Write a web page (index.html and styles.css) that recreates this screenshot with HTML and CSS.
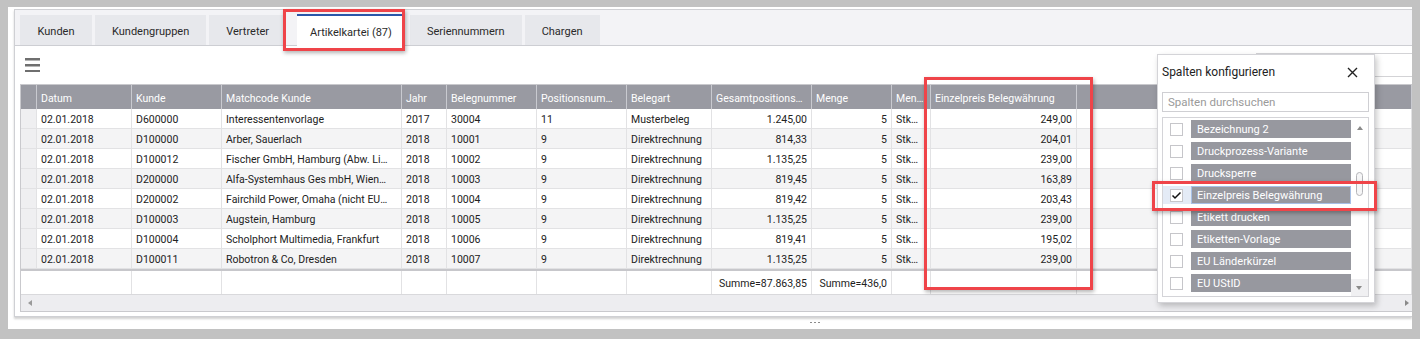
FILE: index.html
```html
<!DOCTYPE html>
<html lang="de">
<head>
    <meta charset="UTF-8">
    <title>Artikelkartei</title>
    <link rel="stylesheet" href="styles.css">
</head>
<body>
    <div class="frame">
        <div class="panel">
            <div class="tabs">
                <div class="tab">Kunden</div>
                <div class="tab">Kundengruppen</div>
                <div class="tab">Vertreter</div>
                <div class="tab active">Artikelkartei (87)</div>
                <div class="tab">Seriennummern</div>
                <div class="tab">Chargen</div>
            </div>

            <div class="content">
                <div class="toolbar">
                    <svg class="menu-icon" width="15" height="14" viewBox="0 0 15 14">
                        <rect x="0" y="0" width="15" height="2.5" fill="#6f6f6f"/>
                        <rect x="0" y="6" width="15" height="2.5" fill="#6f6f6f"/>
                        <rect x="0" y="12" width="15" height="2.5" fill="#6f6f6f"/>
                    </svg>
                    <div class="search"></div>
                </div>

                <div class="grid">
                    <div class="grid-row head">
                        <div class="cell"></div>
                        <div class="cell">Datum</div>
                        <div class="cell">Kunde</div>
                        <div class="cell">Matchcode Kunde</div>
                        <div class="cell">Jahr</div>
                        <div class="cell">Belegnummer</div>
                        <div class="cell">Positionsnum…</div>
                        <div class="cell">Belegart</div>
                        <div class="cell">Gesamtpositions…</div>
                        <div class="cell">Menge</div>
                        <div class="cell">Men…</div>
                        <div class="cell">Einzelpreis Belegwährung</div>
                        <div class="cell"></div>
                    </div>

                    <div class="grid-row">
                        <div class="cell sel"></div>
                        <div class="cell">02.01.2018</div>
                        <div class="cell">D600000</div>
                        <div class="cell">Interessentenvorlage</div>
                        <div class="cell">2017</div>
                        <div class="cell">30004</div>
                        <div class="cell">11</div>
                        <div class="cell">Musterbeleg</div>
                        <div class="cell num">1.245,00</div>
                        <div class="cell num">5</div>
                        <div class="cell">Stk…</div>
                        <div class="cell num">249,00</div>
                        <div class="cell"></div>
                    </div>
                    <div class="grid-row">
                        <div class="cell sel"></div>
                        <div class="cell">02.01.2018</div>
                        <div class="cell">D100000</div>
                        <div class="cell">Arber, Sauerlach</div>
                        <div class="cell">2018</div>
                        <div class="cell">10001</div>
                        <div class="cell">9</div>
                        <div class="cell">Direktrechnung</div>
                        <div class="cell num">814,33</div>
                        <div class="cell num">5</div>
                        <div class="cell">Stk…</div>
                        <div class="cell num">204,01</div>
                        <div class="cell"></div>
                    </div>
                    <div class="grid-row">
                        <div class="cell sel"></div>
                        <div class="cell">02.01.2018</div>
                        <div class="cell">D100012</div>
                        <div class="cell">Fischer GmbH, Hamburg (Abw. Li…</div>
                        <div class="cell">2018</div>
                        <div class="cell">10002</div>
                        <div class="cell">9</div>
                        <div class="cell">Direktrechnung</div>
                        <div class="cell num">1.135,25</div>
                        <div class="cell num">5</div>
                        <div class="cell">Stk…</div>
                        <div class="cell num">239,00</div>
                        <div class="cell"></div>
                    </div>
                    <div class="grid-row">
                        <div class="cell sel"></div>
                        <div class="cell">02.01.2018</div>
                        <div class="cell">D200000</div>
                        <div class="cell">Alfa-Systemhaus Ges mbH, Wien…</div>
                        <div class="cell">2018</div>
                        <div class="cell">10003</div>
                        <div class="cell">9</div>
                        <div class="cell">Direktrechnung</div>
                        <div class="cell num">819,45</div>
                        <div class="cell num">5</div>
                        <div class="cell">Stk…</div>
                        <div class="cell num">163,89</div>
                        <div class="cell"></div>
                    </div>
                    <div class="grid-row">
                        <div class="cell sel"></div>
                        <div class="cell">02.01.2018</div>
                        <div class="cell">D200002</div>
                        <div class="cell">Fairchild Power, Omaha (nicht EU…</div>
                        <div class="cell">2018</div>
                        <div class="cell">10004</div>
                        <div class="cell">9</div>
                        <div class="cell">Direktrechnung</div>
                        <div class="cell num">819,42</div>
                        <div class="cell num">5</div>
                        <div class="cell">Stk…</div>
                        <div class="cell num">203,43</div>
                        <div class="cell"></div>
                    </div>
                    <div class="grid-row">
                        <div class="cell sel"></div>
                        <div class="cell">02.01.2018</div>
                        <div class="cell">D100003</div>
                        <div class="cell">Augstein, Hamburg</div>
                        <div class="cell">2018</div>
                        <div class="cell">10005</div>
                        <div class="cell">9</div>
                        <div class="cell">Direktrechnung</div>
                        <div class="cell num">1.135,25</div>
                        <div class="cell num">5</div>
                        <div class="cell">Stk…</div>
                        <div class="cell num">239,00</div>
                        <div class="cell"></div>
                    </div>
                    <div class="grid-row">
                        <div class="cell sel"></div>
                        <div class="cell">02.01.2018</div>
                        <div class="cell">D100004</div>
                        <div class="cell">Scholphort Multimedia, Frankfurt</div>
                        <div class="cell">2018</div>
                        <div class="cell">10006</div>
                        <div class="cell">9</div>
                        <div class="cell">Direktrechnung</div>
                        <div class="cell num">819,41</div>
                        <div class="cell num">5</div>
                        <div class="cell">Stk…</div>
                        <div class="cell num">195,02</div>
                        <div class="cell"></div>
                    </div>
                    <div class="grid-row">
                        <div class="cell sel"></div>
                        <div class="cell">02.01.2018</div>
                        <div class="cell">D100011</div>
                        <div class="cell">Robotron &amp; Co, Dresden</div>
                        <div class="cell">2018</div>
                        <div class="cell">10007</div>
                        <div class="cell">9</div>
                        <div class="cell">Direktrechnung</div>
                        <div class="cell num">1.135,25</div>
                        <div class="cell num">5</div>
                        <div class="cell">Stk…</div>
                        <div class="cell num">239,00</div>
                        <div class="cell"></div>
                    </div>

                    <!-- totals -->
                    <div class="grid-row summary">
                        <div class="cell wide"></div>
                        <div class="cell"></div>
                        <div class="cell"></div>
                        <div class="cell"></div>
                        <div class="cell"></div>
                        <div class="cell"></div>
                        <div class="cell"></div>
                        <div class="cell num">Summe=87.863,85</div>
                        <div class="cell num">Summe=436,0</div>
                        <div class="cell"></div>
                        <div class="cell"></div>
                        <div class="cell"></div>
                    </div>

                    <div class="hscroll">
                        <span class="arrow-left"></span>
                        <span class="arrow-right"></span>
                    </div>
                </div>
            </div>
        </div>

        <svg class="grip" width="10" height="2" viewBox="0 0 10 2">
            <rect x="0" y="0" width="2" height="1" fill="#8c8c8c"/>
            <rect x="4" y="0" width="2" height="1" fill="#8c8c8c"/>
            <rect x="8" y="0" width="2" height="1" fill="#8c8c8c"/>
        </svg>

        <!-- column chooser -->
        <div class="popup">
            <div class="popup-head">
                <span>Spalten konfigurieren</span>
                <svg width="11" height="11" viewBox="0 0 11 11">
                    <path d="M1 1 L10 10 M10 1 L1 10" stroke="#222" stroke-width="1.4"/>
                </svg>
            </div>
            <div class="popup-search">Spalten durchsuchen</div>
            <div class="column-list">
                <div class="items">
                    <div class="item"><span class="check"></span><span class="label">Bezeichnung 2</span></div>
                    <div class="item"><span class="check"></span><span class="label">Druckprozess-Variante</span></div>
                    <div class="item"><span class="check"></span><span class="label">Drucksperre</span></div>
                    <div class="item selected">
                        <span class="check">
                            <svg width="11" height="11" viewBox="0 0 11 11"><path d="M1.5 5.5 L4 8 L9.5 2.5" fill="none" stroke="#111" stroke-width="1.5"/></svg>
                        </span>
                        <span class="label">Einzelpreis Belegwährung</span>
                    </div>
                    <div class="item"><span class="check"></span><span class="label">Etikett drucken</span></div>
                    <div class="item"><span class="check"></span><span class="label">Etiketten-Vorlage</span></div>
                    <div class="item"><span class="check"></span><span class="label">EU Länderkürzel</span></div>
                    <div class="item"><span class="check"></span><span class="label">EU UStID</span></div>
                </div>
                <div class="vscroll">
                    <span class="arrow-up"></span>
                    <span class="thumb"></span>
                    <span class="arrow-down"></span>
                </div>
            </div>
        </div>

        <!-- highlight marks -->
        <div class="mark mark-tab"></div>
        <div class="mark mark-column"></div>
        <div class="mark mark-item"></div>
    </div>
</body>
</html>
```

FILE: styles.css
```css
body {
    margin: 0;
    background-color: #c2c2c2;
    font-family: Roboto, "Open Sans", sans-serif;
    color: #222;
    height: 339px;
    overflow: hidden;
}

.frame {
    position: relative;
    margin: 7px 0 0 8px;
    width: 1404px;
    height: 322px;
    padding: 2px 0 0 6px;
    box-sizing: border-box;
    background: #fff;
    overflow: hidden;
}

.panel {
    height: 308px;
    box-sizing: border-box;
    border: 1px solid #cfd0d4;
    border-right: none;
    box-shadow: 0 2px 2px rgba(0, 0, 0, 0.18);
    display: flex;
    flex-direction: column;
}

/* Tabs */
.tabs {
    height: 36px;
    box-sizing: border-box;
    background: #f3f3f6;
    border-bottom: 1px solid #cdced3;
    display: flex;
    align-items: flex-end;
    gap: 3px;
    padding-left: 5px;
}

.tab {
    height: 30px;
    min-width: 72px;
    padding: 3px 17px 0;
    box-sizing: border-box;
    background: #e7e8ec;
    display: flex;
    align-items: center;
    justify-content: center;
    font-size: 11px;
    color: #2a2a2a;
}

.tab.active {
    height: 32px;
    background: #fff;
    border-top: 2px solid #2b56a8;
    margin: 0 2px -1px 8px;
    padding: 2px 13px 0;
}

/* Content */
.content {
    flex: 1;
    padding: 0 0 4px 5px;
}

.toolbar {
    height: 38px;
    display: flex;
    justify-content: space-between;
    align-items: flex-start;
}

.menu-icon {
    margin: 12px 0 0 5px;
}

.search {
    margin-top: 7px;
    width: 156px;
    height: 24px;
    box-sizing: border-box;
    border: 1px solid #d3d3d6;
    border-right: none;
}

/* Grid */
.grid {
    border: 1px solid #c9c9cd;
    border-right: none;
    font-size: 10.5px;
}

.grid-row {
    display: grid;
    grid-template-columns: 16px 95px 90px 180px 45px 90px 90px 85px 100px 80px 39px 146px 1fr;
    height: 20px;
}

.grid-row:nth-child(odd) {
    background: #f4f4f5;
}

.cell {
    box-sizing: border-box;
    border-right: 1px solid #e2e2e4;
    border-bottom: 1px solid #e2e2e4;
    padding: 2px 4px 0;
    display: flex;
    align-items: center;
    white-space: nowrap;
    overflow: hidden;
}

.cell.num {
    justify-content: flex-end;
}

.cell.sel {
    background: #efeff1;
}

.grid-row.head {
    height: 24px;
    background: #999aa2;
    color: #fff;
}

.grid-row.head .cell {
    border-right-color: #c9cad0;
    border-bottom: none;
}

.grid-row.summary {
    height: 25px;
    background: #fff;
    border-top: 2px solid #c7c7cb;
    box-sizing: border-box;
}

.grid-row.summary .cell {
    border-bottom: none;
}

.grid-row.summary .wide {
    grid-column: span 2;
}

.hscroll {
    height: 17px;
    box-sizing: border-box;
    background: #ededf0;
    border-top: 1px solid #d9d9dc;
    display: flex;
    align-items: center;
    justify-content: space-between;
    padding: 0 3px 0 7px;
}

.arrow-left {
    border-right: 4px solid #9a9a9a;
    border-top: 3px solid transparent;
    border-bottom: 3px solid transparent;
}

.arrow-right {
    border-left: 4px solid #8a8a8a;
    border-top: 3px solid transparent;
    border-bottom: 3px solid transparent;
}

.grip {
    display: block;
    margin: 5px 0 0 796px;
}

/* Column chooser popup */
.popup {
    position: absolute;
    left: 1149px;
    top: 47px;
    width: 218px;
    height: 249px;
    box-sizing: border-box;
    background: #fff;
    border: 1px solid #d4d4d8;
    box-shadow: 2px 3px 6px rgba(0, 0, 0, 0.22);
    padding: 0 5px 0 4px;
}

.popup-head {
    height: 34px;
    display: flex;
    align-items: center;
    justify-content: space-between;
    font-size: 12px;
    color: #222;
    padding-right: 11px;
}

.popup-search {
    margin-top: 3px;
    height: 20px;
    box-sizing: border-box;
    border: 1px solid #cfcfd3;
    font-size: 11.5px;
    color: #9a9a9a;
    padding-left: 5px;
    display: flex;
    align-items: center;
}

.column-list {
    margin-top: 5px;
    height: 180px;
    box-sizing: border-box;
    border: 1px solid #d4d4d8;
    display: flex;
    overflow: hidden;
}

.items {
    flex: 1;
    padding-top: 2px;
    display: flex;
    flex-direction: column;
    gap: 4px;
}

.item {
    height: 18px;
    display: flex;
    align-items: center;
    gap: 8px;
    padding-left: 7px;
    flex-shrink: 0;
}

.check {
    width: 13px;
    height: 13px;
    box-sizing: border-box;
    border: 1px solid #c6c6ca;
    background: #fff;
    display: flex;
    align-items: center;
    justify-content: center;
}

.label {
    flex: 1;
    height: 18px;
    box-sizing: border-box;
    background: #97989f;
    color: #fff;
    font-size: 11px;
    padding: 1px 0 0 6px;
    display: flex;
    align-items: center;
}

.item.selected {
    background: #e4ebf6;
}

.item.selected .label {
    border: 1px solid #a8c0e6;
    padding-left: 5px;
}

.vscroll {
    width: 17px;
    display: flex;
    flex-direction: column;
    align-items: center;
    position: relative;
}

.arrow-up {
    margin-top: 8px;
    border-bottom: 4px solid #8a8a8a;
    border-left: 3.5px solid transparent;
    border-right: 3.5px solid transparent;
}

.thumb {
    margin-top: 42px;
    width: 7px;
    height: 24px;
    box-sizing: border-box;
    border: 1px solid #b4b4b8;
    border-radius: 4px;
    background: #f6f6f7;
}

.arrow-down {
    margin-top: auto;
    width: 17px;
    height: 17px;
    background: #f0f0f2;
    position: relative;
}

.arrow-down::after {
    content: "";
    position: absolute;
    left: 5px;
    top: 7px;
    border-top: 4px solid #8a8a8a;
    border-left: 3.5px solid transparent;
    border-right: 3.5px solid transparent;
}

/* Red highlight frames */
.mark {
    position: absolute;
    box-sizing: border-box;
    border: 3px solid #ef4449;
    box-shadow: 1px 2px 4px rgba(0, 0, 0, 0.3);
}

.mark-tab {
    left: 275px;
    top: 2px;
    width: 122px;
    height: 42px;
}

.mark-column {
    left: 916px;
    top: 70px;
    width: 169px;
    height: 213px;
}

.mark-item {
    left: 1144px;
    top: 174px;
    width: 225px;
    height: 30px;
}
```
